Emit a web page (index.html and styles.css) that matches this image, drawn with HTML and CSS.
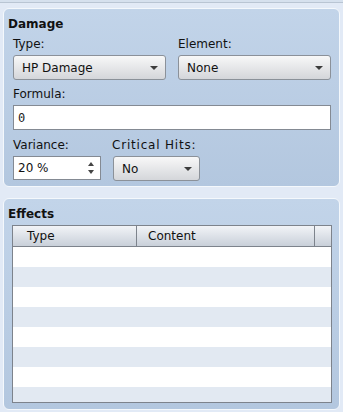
FILE: index.html
```html
<!DOCTYPE html>
<html>
<head>
<meta charset="utf-8">
<link rel="stylesheet" href="styles.css">
</head>
<body>
<div class="topline"></div>
<div class="page">
  <section class="panel damage">
    <h2 class="title">Damage</h2>
    <div class="row two">
      <div class="field">
        <label class="lbl">Type:</label>
        <div class="select wide"><span>HP Damage</span><i class="arrow"></i></div>
      </div>
      <div class="field">
        <label class="lbl">Element:</label>
        <div class="select wide"><span>None</span><i class="arrow"></i></div>
      </div>
    </div>
    <div class="field">
      <label class="lbl">Formula:</label>
      <div class="input formula"><span class="mono">0</span></div>
    </div>
    <div class="row three">
      <div class="field">
        <label class="lbl">Variance:</label>
        <div class="input spin"><span>20 %</span>
          <span class="spinbtns"><i class="up"></i><i class="down"></i></span>
        </div>
      </div>
      <div class="field crit">
        <label class="lbl">Critical Hits:</label>
        <div class="select small"><span>No</span><i class="arrow"></i></div>
      </div>
    </div>
  </section>
  <section class="panel effects">
    <h2 class="title">Effects</h2>
    <div class="table">
      <div class="thead">
        <div class="th c1">Type</div>
        <div class="th c2">Content</div>
        <div class="th c3"></div>
      </div>
      <div class="tr"></div>
      <div class="tr alt"></div>
      <div class="tr"></div>
      <div class="tr alt"></div>
      <div class="tr"></div>
      <div class="tr alt"></div>
      <div class="tr"></div>
      <div class="tr alt last"></div>
    </div>
  </section>
</div>
</body>
</html>
```
FILE: styles.css
```css
* { box-sizing: border-box; }
html, body { margin: 0; padding: 0; }
body {
  width: 343px;
  height: 412px;
  overflow: hidden;
  background: #e2eaf6;
  font-family: "DejaVu Sans", Verdana, sans-serif;
  font-size: 12px;
  color: #111;
}
.topline {
  height: 3px;
  background: #d6e1ee;
  border-bottom: 1px solid #b9c5d3;
}
.page {
  padding: 5px 3px 0 3px;
  display: flex;
  flex-direction: column;
  gap: 11px;
}
.panel {
  border: 1px solid #f4f8fc;
  border-radius: 6px;
  background: linear-gradient(#c2d4e9, #b3c7df);
  padding: 7px 8px 0 4px;
}
.damage { height: 179px; }
.effects { height: 212px; }
.title {
  margin: 0 0 -2px 0;
  font-size: 12px;
  font-weight: bold;
  line-height: 16px;
  height: 16px;
}
.row { display: flex; gap: 12px; }
.field { display: flex; flex-direction: column; padding-left: 5px; }
.row .field + .field { padding-left: 0; }
.lbl { line-height: 15px; height: 15px; margin-top: 7px; margin-bottom: 3px; }
.row.three .lbl { margin-top: 8px; }
.select {
  height: 25px;
  border: 1px solid #8b9199;
  border-radius: 3px;
  background: linear-gradient(#f8f8f8, #e6e7e9 50%, #d4d6da);
  display: flex;
  align-items: center;
  padding: 0 8px;
  justify-content: space-between;
}
.select.wide { width: 153px; }
.select.small { width: 87px; }
.arrow {
  width: 0; height: 0;
  border-left: 4px solid transparent;
  border-right: 4px solid transparent;
  border-top: 4px solid #3c3c3c;
  margin-right: -1px;
}
.input {
  background: #fff;
  border: 1px solid #848a93;
  height: 25px;
  display: flex;
  align-items: center;
  padding: 0 4px;
}
.formula { width: 318px; }
.mono { font-family: "DejaVu Sans Mono", monospace; font-size: 12px; color: #222; }
.spin { width: 88px; height: 24px; justify-content: space-between; padding-right: 6px; }
.spinbtns { display: flex; flex-direction: column; gap: 4px; }
.spinbtns i { width: 0; height: 0; border-left: 3px solid transparent; border-right: 3px solid transparent; }
.spinbtns .up { border-bottom: 4px solid #444; }
.spinbtns .down { border-top: 4px solid #444; }
.crit { padding-left: 0; }
.crit .lbl { margin-left: -1px; letter-spacing: 0.8px; }
.table {
  margin: 5px 0 0 4px;
  width: 320px;
  border: 1px solid #7d838c;
  background: #fff;
}
.thead {
  display: flex;
  height: 21px;
  background: linear-gradient(#f2f4f7, #d9dee5 60%, #c9d0d9);
  border-bottom: 1px solid #7d838c;
}
.th { line-height: 20px; border-right: 1px solid #7d838c; }
.c1 { width: 124px; padding-left: 14px; }
.c2 { width: 178px; padding-left: 11px; }
.c3 { flex: 1; border-right: none; }
.tr { height: 20px; background: #fff; }
.tr.alt { background: #e2e9f2; }
.tr.last { height: 15px; }
```
